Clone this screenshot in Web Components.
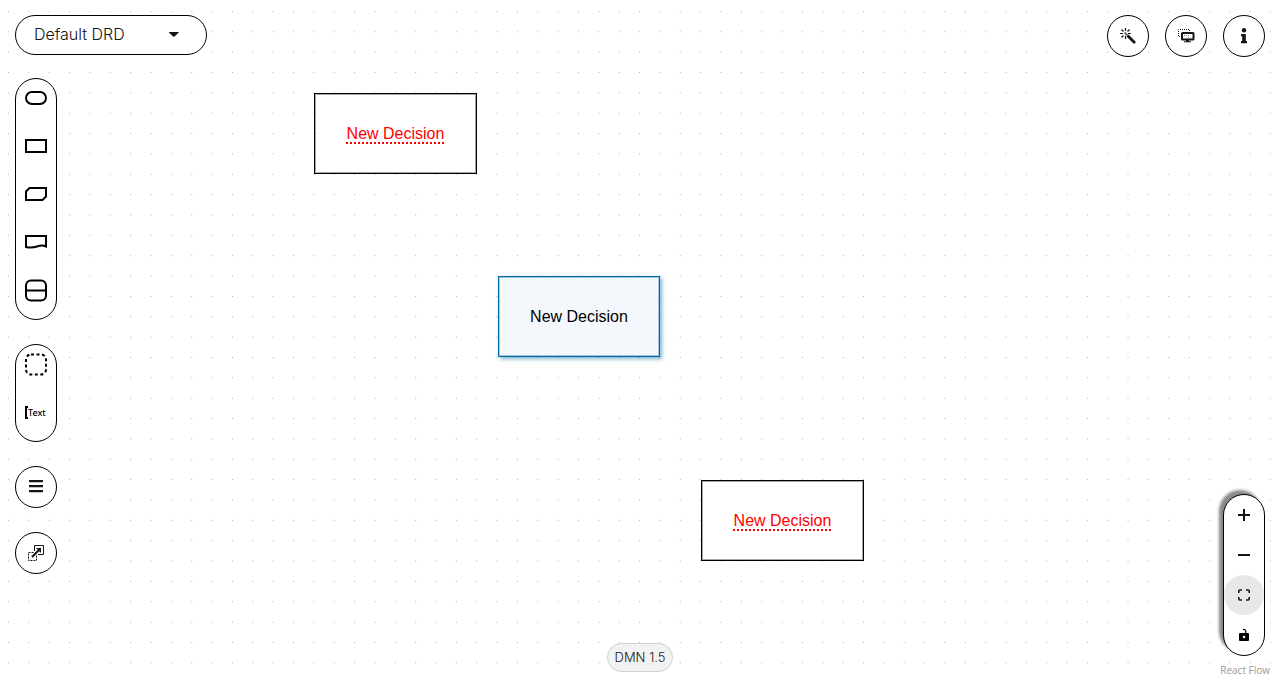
<!DOCTYPE html>
<html lang="en">
<head>
<meta charset="utf-8">
<title>DMN Editor</title>
<style>
  html, body { margin: 0; height: 100%; }
  body { font-family: "Open Sans", "Noto Sans", sans-serif; color: #151515; background: #fff; }
</style>
</head>
<body>
<dmn-editor></dmn-editor>
<script>
const define = (name, html, setup) => customElements.define(name, class extends HTMLElement {
  connectedCallback() {
    if (this.shadowRoot) return;
    const template = document.createElement('template');
    template.innerHTML = html;
    this.attachShadow({ mode: 'open' }).append(template.content.cloneNode(true));
    if (setup) setup(this, this.shadowRoot);
  }
});

define('dot-grid', `
  <style>
    :host { display: block; position: absolute; inset: 0; }
    svg { display: block; width: 100%; height: 100%; }
  </style>
  <svg aria-hidden="true">
    <defs>
      <pattern id="dots" width="20" height="20" patternUnits="userSpaceOnUse" patternTransform="translate(-1.6 1.3) scale(1.0177)">
        <circle cx="10" cy="10" r="0.5" fill="#91919a"/>
      </pattern>
    </defs>
    <rect width="100%" height="100%" fill="url(#dots)"/>
  </svg>`);

define('decision-node', `
  <style>
    :host { position: absolute; box-sizing: border-box; width: 163px; height: 81px;
      display: flex; align-items: center; justify-content: center;
      border: 1px solid #000; outline: 1px solid rgba(0,0,0,.35); outline-offset: -2px;
      background: rgba(255,255,255,.9); color: #000;
      font: 16px/24px "Liberation Sans", Arial, sans-serif; }
    :host([invalid]) { color: #f00; }
    :host([invalid]) span { text-decoration: underline dotted 2px; text-underline-offset: 4px; }
    :host([selected]) { width: 162px; background: rgba(244,248,252,.96); border-color: #006ba4;
      outline-color: rgba(0,107,164,.35); box-shadow: 2px 2px 4px rgba(0,107,164,.5); }
  </style>
  <span><slot></slot></span>`);

define('drd-select', `
  <style>
    :host { display: flex; position: relative; width: 192px; height: 40px; }
    select { appearance: none; flex: 1; margin: 0; padding: 0 40px 2px 18px; border: 1px solid #000;
      border-radius: 20px; background: #fff; color: #151515; font: 300 16px/24px Inter, sans-serif; }
    svg { position: absolute; right: 27px; top: 16px; pointer-events: none; }
  </style>
  <select aria-label="Decision requirements diagram"><option>Default DRD</option></select>
  <svg width="12" height="7" viewBox="0 0 12 7" aria-hidden="true"><path d="M1.4 1h8.8q1 0 .3.8L6.5 5.6q-.7.6-1.4 0L1.1 1.8Q.4 1 1.4 1z" fill="#151515"/></svg>`);

define('tool-group', `
  <style>
    :host { display: flex; flex-direction: column; box-sizing: border-box; width: 42px; gap: 8px;
      padding-bottom: 8px; border: 1px solid #000; border-radius: 21px; background: #fff; }
    :host([compact]) { gap: 0; padding: 0; }
    :host([raised]) { box-shadow: -4px -4px 3px #888; }
  </style>
  <slot></slot>`);

define('tool-button', `
  <style>
    :host { display: block; width: 40px; height: 40px; }
    button { display: flex; align-items: center; justify-content: center; width: 100%; height: 100%;
      margin: 0; padding: 0; border: 0; border-radius: 20px; background: none; color: #151515; }
    :host([active]) button { background: #e8e8e8; }
    ::slotted(svg) { display: block; }
  </style>
  <button type="button"><slot></slot></button>`,
  (host, root) => root.querySelector('button').setAttribute('aria-label', host.getAttribute('label')));

define('version-badge', `
  <style>
    :host { display: block; box-sizing: border-box; padding: 0 7px; border: 1px solid #d2d2d2; border-radius: 15px;
      background: #f2f2f2; font: 300 13px/27px Inter, sans-serif; white-space: nowrap; }
  </style>
  <slot></slot>`);

define('dmn-editor', `
  <style>
    :host { display: block; position: relative; min-height: 100vh; overflow: hidden; }
    main { position: relative; display: flex; min-height: 100vh; box-sizing: border-box; }
    .left, .right { flex: 1; display: flex; flex-direction: column; padding: 15px 15px 0; }
    .left { gap: 23px; align-items: flex-start; }
    .right { align-items: flex-end; justify-content: space-between; padding-bottom: 3px; }
    .tools { display: flex; flex-direction: column; gap: 24px; }
    .actions { display: flex; gap: 16px; }
    .center { align-self: flex-end; padding-bottom: 8px; }
    .bottom { display: flex; flex-direction: column; align-items: flex-end; gap: 8px; }
    .bottom a { margin-right: -5px; color: #999; font: 10px/13px "Open Sans", sans-serif; text-decoration: none; }
    .n1 { left: 314px; top: 93px; }
    .n2 { left: 498px; top: 276px; }
    .n3 { left: 701px; top: 480px; }
  </style>
  <dot-grid></dot-grid>
  <decision-node class="n1" invalid>New Decision</decision-node>
  <decision-node class="n2" selected>New Decision</decision-node>
  <decision-node class="n3" invalid>New Decision</decision-node>
  <main>
    <div class="left">
      <drd-select></drd-select>
      <div class="tools">
        <tool-group>
          <tool-button label="Input data"><svg width="24" height="24" viewBox="0 0 24 24" fill="none" stroke="#000" stroke-width="2"><rect x="2" y="5" width="20" height="12" rx="6"/></svg></tool-button>
          <tool-button label="Decision"><svg width="24" height="24" viewBox="0 0 24 24" fill="none" stroke="#000" stroke-width="2"><rect x="2" y="5" width="20" height="12"/></svg></tool-button>
          <tool-button label="Business knowledge model"><svg width="24" height="24" viewBox="0 0 24 24" fill="none" stroke="#000" stroke-width="2"><path d="M5.500 5H22v8.500L18.500 17H2V8.500z"/></svg></tool-button>
          <tool-button label="Knowledge source"><svg width="24" height="24" viewBox="0 0 24 24" fill="none" stroke="#000" stroke-width="2"><path d="M2 5h20v10.500c-3-1.500-6-1-9 0s-7 1.500-11 .5z"/></svg></tool-button>
          <tool-button label="Decision service"><svg width="24" height="24" viewBox="0 0 24 24" fill="none" stroke="#000" stroke-width="2"><rect x="2" y="1.500" width="20" height="20" rx="5"/><path d="M2 11.500h20"/></svg></tool-button>
        </tool-group>
        <tool-group>
          <tool-button label="Group"><svg width="24" height="24" viewBox="0 0 24 24" fill="none" stroke="#000" stroke-width="2"><rect x="2" y="1.500" width="20" height="20" rx="5" stroke-dasharray="3 2.500"/></svg></tool-button>
          <tool-button label="Text annotation"><svg width="24" height="24" viewBox="0 0 24 24" fill="none" stroke="#000" stroke-width="2"><path d="M4 6H2v11h2"/><text x="4" y="15" font-family="Noto Sans, sans-serif" font-size="9" font-weight="500" fill="#000" stroke="none">Text</text></svg></tool-button>
        </tool-group>
        <tool-group compact>
          <tool-button label="Nodes list"><svg width="16" height="16" viewBox="0 0 16 16" fill="#151515"><path d="M1 1h14v2.200H1zM1 6h14v2.200H1zM1 11h14v2.200H1z"/></svg></tool-button>
        </tool-group>
        <tool-group compact>
          <tool-button label="External nodes"><svg width="16" height="16" viewBox="0 0 16 16" fill="none" stroke="#151515"><path d="M6.500 6V.5h9v9H10"/><path d="M5.500 7.500h-5v8h8v-5" stroke-dasharray="2 1"/><path d="M4 12l7-7" stroke-width="2.200"/><path d="M8 3h5v5z" fill="#151515" stroke="none"/></svg></tool-button>
        </tool-group>
      </div>
    </div>
    <div class="center"><version-badge>DMN 1.5</version-badge></div>
    <div class="right">
      <div class="actions">
        <tool-group compact><tool-button label="Autolayout"><svg width="16" height="16" viewBox="0 0 16 16" fill="none" stroke="#151515"><path d="M7.500 7.500L15 15" stroke-width="2.800"/><path d="M4.600 4.600l3 3" stroke-width="1.600" stroke="#555"/><path d="M5.500 0v3M5.500 8v3M0 5.500h3M8 5.500h3M1.500 1.500l2 2M9.500 1.500l-2 2M1.500 9.500l2-2" stroke-width="1.200"/></svg></tool-button></tool-group>
        <tool-group compact><tool-button label="Diagram overlays"><svg width="18" height="16" viewBox="0 0 18 16" fill="none" stroke="#151515"><path d="M3 8.500H1.500v-7h11V3" stroke-dasharray="1 1"/><rect x="5" y="5" width="11.500" height="6.500" rx=".5" stroke-width="2"/><path d="M7 7.500h4.500v2.500" stroke-dasharray="1 1" stroke="#777"/><path d="M9 12h3v1.200h2v1H7v-1h2z" fill="#151515" stroke="none"/></svg></tool-button></tool-group>
        <tool-group compact><tool-button label="Properties"><svg width="8" height="16" viewBox="0 0 8 16" fill="#151515"><circle cx="4" cy="2.200" r="2.200"/><path d="M1 6h4.800v7H7v2.200H1V13h1.200V8.200H1z"/></svg></tool-button></tool-group>
      </div>
      <div class="bottom">
        <tool-group compact raised>
          <tool-button label="Zoom in"><svg width="12" height="12" viewBox="0 0 12 12" stroke="#151515" stroke-width="2"><path d="M0 6h12M6 0v12"/></svg></tool-button>
          <tool-button label="Zoom out"><svg width="12" height="12" viewBox="0 0 12 12" stroke="#151515" stroke-width="2"><path d="M0 6h12"/></svg></tool-button>
          <tool-button label="Fit view" active><svg width="12" height="12" viewBox="0 0 12 12" fill="none" stroke="#151515" stroke-width="1.600"><path d="M.8 4V2Q.8 1 2 1h2M8 1h2q1.200 0 1.200 1v2M11.200 8v2q0 1-1.200 1H8M4 11H2Q.8 11 .8 10V8"/></svg></tool-button>
          <tool-button label="Toggle interactivity"><svg width="12" height="14" viewBox="0 0 12 14"><path d="M5 1.600q2.500-.6 2.800 1.600V6" fill="none" stroke="#000" stroke-width="1.200"/><rect x="1" y="5" width="10" height="8" rx="1"/><circle cx="6" cy="9" r="1.200" fill="#fff"/></svg></tool-button>
        </tool-group>
        <a href="#">React Flow</a>
      </div>
    </div>
  </main>`);
</script>
</body>
</html>
